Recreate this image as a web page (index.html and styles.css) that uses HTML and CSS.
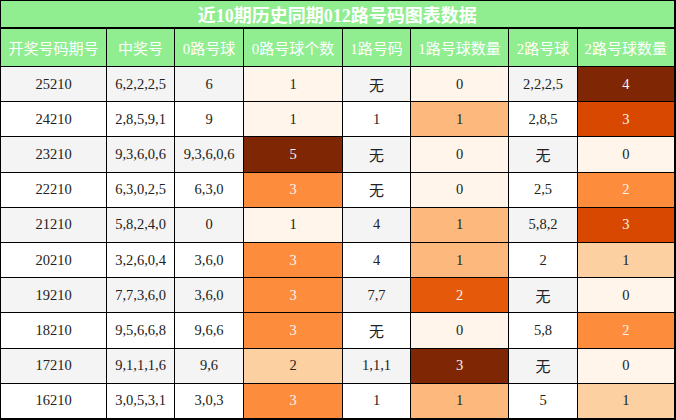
FILE: index.html
```html
<!DOCTYPE html>
<html>
<head>
<meta charset="utf-8">
<link rel="stylesheet" href="styles.css">
</head>
<body>
<table class="tbl">
<colgroup>
<col class="c1"><col class="c2"><col class="c3"><col class="c4"><col class="c5"><col class="c6"><col class="c7"><col class="c8">
</colgroup>
<thead>
<tr class="title"><th colspan="8">近10期历史同期012路号码图表数据</th></tr>
<tr class="head"><th>开奖号码期号</th><th>中奖号</th><th>0路号球</th><th>0路号球个数</th><th>1路号码</th><th>1路号球数量</th><th>2路号球</th><th>2路号球数量</th></tr>
</thead>
<tbody>
<tr class="g"><td>25210</td><td>6,2,2,2,5</td><td>6</td><td class="h0">1</td><td class="cn">无</td><td class="h0">0</td><td>2,2,2,5</td><td class="h9 w">4</td></tr>
<tr><td>24210</td><td>2,8,5,9,1</td><td>9</td><td class="h0">1</td><td>1</td><td class="h3">1</td><td>2,8,5</td><td class="h7 w">3</td></tr>
<tr class="g"><td>23210</td><td>9,3,6,0,6</td><td>9,3,6,0,6</td><td class="h9 w">5</td><td class="cn">无</td><td class="h0">0</td><td class="cn">无</td><td class="h0">0</td></tr>
<tr><td>22210</td><td>6,3,0,2,5</td><td>6,3,0</td><td class="h5 w">3</td><td class="cn">无</td><td class="h0">0</td><td>2,5</td><td class="h5 w">2</td></tr>
<tr class="g"><td>21210</td><td>5,8,2,4,0</td><td>0</td><td class="h0">1</td><td>4</td><td class="h3">1</td><td>5,8,2</td><td class="h7 w">3</td></tr>
<tr><td>20210</td><td>3,2,6,0,4</td><td>3,6,0</td><td class="h5 w">3</td><td>4</td><td class="h3">1</td><td>2</td><td class="h2">1</td></tr>
<tr class="g"><td>19210</td><td>7,7,3,6,0</td><td>3,6,0</td><td class="h5 w">3</td><td>7,7</td><td class="h6 w">2</td><td class="cn">无</td><td class="h0">0</td></tr>
<tr><td>18210</td><td>9,5,6,6,8</td><td>9,6,6</td><td class="h5 w">3</td><td class="cn">无</td><td class="h0">0</td><td>5,8</td><td class="h5 w">2</td></tr>
<tr class="g"><td>17210</td><td>9,1,1,1,6</td><td>9,6</td><td class="h2">2</td><td>1,1,1</td><td class="h9 w">3</td><td class="cn">无</td><td class="h0">0</td></tr>
<tr><td>16210</td><td>3,0,5,3,1</td><td>3,0,3</td><td class="h5 w">3</td><td>1</td><td class="h3">1</td><td>5</td><td class="h2">1</td></tr>
</tbody>
</table>
</body>
</html>
```

FILE: styles.css
```css
html, body {
  margin: 0;
  padding: 0;
  background: #ffffff;
}
.tbl {
  width: 674px;
  table-layout: fixed;
  border-collapse: collapse;
  border-top: 1px solid #000;
  border-left: 1px solid #000;
  border-right: 2px solid #000;
  border-bottom: 2px solid #000;
  font-family: "Liberation Serif", "Noto Sans CJK SC", serif;
  color: #222;
}
.c1 { width: 106px; }
.c2 { width: 68px; }
.c3 { width: 69px; }
.c4 { width: 99px; }
.c5 { width: 68px; }
.c6 { width: 98px; }
.c7 { width: 69px; }
.c8 { width: 97px; }
th, td {
  border: 1px solid #000;
  padding: 0;
  text-align: center;
  vertical-align: middle;
}
.title th {
  height: 25px;
  background: #90ee90;
  color: #fff;
  font-size: 18px;
  font-weight: bold;
  border-bottom: 2px solid #000;
  font-family: "Liberation Serif", "Noto Sans CJK SC", serif;
}
.head th {
  height: 37px;
  background: #90ee90;
  color: #fff;
  font-size: 15px;
  font-weight: normal;
  font-family: "Liberation Serif", "Noto Sans CJK SC", serif;
}
td {
  height: 34.2px;
  font-size: 14.5px;
  background: #ffffff;
}
tr.g td { background: #f4f4f4; }
td.cn { font-size: 15px; }
tr td.h0, td.h0 { background: #fff5eb; }
tr td.h2, td.h2 { background: #fdd0a2; }
tr td.h3, td.h3 { background: #fdb97d; }
tr td.h5, td.h5 { background: #fd8d3c; }
tr td.h6, td.h6 { background: #e5590b; }
tr td.h7, td.h7 { background: #d94801; }
tr td.h9, td.h9 { background: #7f2704; }
td.w { color: #f4f4f4; }
```
